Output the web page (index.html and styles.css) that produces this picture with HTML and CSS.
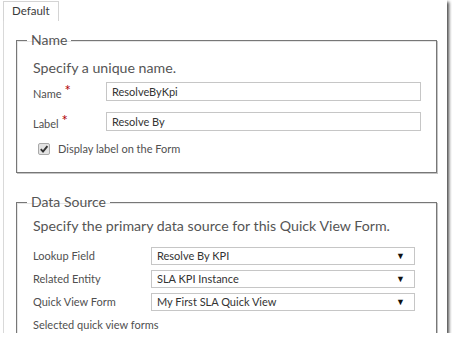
FILE: index.html
```html
<!DOCTYPE html>
<html lang="en">
<head>
  <meta charset="UTF-8" />
  <title>Quick View Form - Default</title>
  <link rel="stylesheet" href="styles.css">
</head>
<body>
  <div class="shot">
    <div class="tabs">
      <span class="tab">Default</span>
    </div>

    <div class="panel">
      <fieldset class="group group-name">
        <legend>Name</legend>
        <div class="body">
          <p class="hint">Specify a unique name.</p>

          <div class="fields fields-name">
            <label class="lbl lbl-req">Name <span class="req">*</span></label>
            <div class="box">ResolveByKpi</div>
            <label class="lbl lbl-req">Label <span class="req">*</span></label>
            <div class="box">Resolve By</div>
          </div>

          <div class="check-row">
            <span class="check">
              <svg width="12" height="12" viewBox="0 0 12 12">
                <rect x="0.5" y="0.5" width="11" height="11" rx="1.5" fill="#e3e3e3" stroke="#a9a9a9"/>
                <path d="M2.8 6.2 L5 8.6 L9.4 3.2" fill="none" stroke="#333" stroke-width="1.9"/>
              </svg>
            </span>
            <span>Display label on the Form</span>
          </div>
        </div>
      </fieldset>

      <fieldset class="group group-data">
        <legend>Data Source</legend>
        <div class="body">
          <p class="hint">Specify the primary data source for this Quick View Form.</p>

          <div class="fields fields-data">
            <label class="lbl">Lookup Field</label>
            <div class="box select">Resolve By KPI<span class="arrow">▼</span></div>
            <label class="lbl">Related Entity</label>
            <div class="box select">SLA KPI Instance<span class="arrow">▼</span></div>
            <label class="lbl">Quick View Form</label>
            <div class="box select">My First SLA Quick View<span class="arrow">▼</span></div>
          </div>

          <p class="note">Selected quick view forms</p>
        </div>
      </fieldset>
    </div>
  </div>
</body>
</html>
```

FILE: styles.css
```css
body {
  margin: 0;
  background-color: #ffffff;
  font-family: 'Lato', 'Open Sans', sans-serif;
  color: #4a4a4a;
}

.shot {
  width: 447px;
  height: 333px;
  overflow: hidden;
  background-color: #fff;
  box-shadow: 2px 2px 3px #4a4a4a;
}

/* tab strip */
.tabs {
  display: flex;
  padding: 1px 0 0 3px;
  height: 19px;
}

.tab {
  width: 46px;
  height: 19px;
  padding-left: 8px;
  border: 1px solid #d4d4d4;
  border-bottom: none;
  font-size: 11.5px;
  line-height: 18px;
  color: #3a3a3a;
}

.panel {
  margin-left: 3px;
  border-left: 1px solid #d9d9d9;
  padding: 10px 0 0 12px;
  height: 400px;
}

/* groups */
.group {
  width: 421px;
  box-sizing: border-box;
  margin: 0;
  padding: 0 0 0 10px;
  border: 1px solid #777;
  box-shadow: 1px 1px 0 #c4c4c4, inset 1px 1px 0 #e6e6e6;
}

.group legend {
  padding: 0 4px;
  font-size: 14px;
  line-height: 20px;
  color: #555;
}

.group-name {
  height: 143px;
}

.group-data {
  margin-top: 19px;
  height: 200px;
}

.body {
  padding-left: 6px;
}

.hint {
  margin: 0;
  font-size: 14.2px;
  line-height: 20px;
  color: #555;
}

.group-name .hint {
  margin-top: 8px;
}

.group-data .hint {
  margin-top: 4px;
}

.fields {
  display: grid;
  align-items: start;
}

.fields-name {
  grid-template-columns: 73px 315px;
  grid-auto-rows: 19px;
  row-gap: 11px;
  margin-top: 4px;
}

.fields-data {
  grid-template-columns: 118px 264px;
  grid-auto-rows: 18px;
  row-gap: 5px;
  margin-top: 11px;
}

.lbl {
  font-size: 11px;
  line-height: 18px;
  color: #505050;
}

.lbl-req {
  padding-top: 3px;
}

.req {
  color: #b00000;
  font-size: 15px;
  line-height: 10px;
  vertical-align: 2px;
}

.box {
  box-sizing: border-box;
  height: 19px;
  padding-left: 5px;
  border: 1px solid #c6c6c6;
  font-size: 11px;
  line-height: 17px;
  color: #333;
  background-color: #fff;
}

.select {
  height: 18px;
  line-height: 16px;
  display: flex;
  justify-content: space-between;
}

.arrow {
  font-size: 9px;
  color: #111;
  padding-right: 9px;
}

.check-row {
  display: flex;
  align-items: center;
  gap: 8px;
  margin: 12px 0 0 5px;
  font-size: 11px;
  line-height: 12px;
  color: #505050;
}

.check {
  display: flex;
  width: 12px;
  height: 12px;
}

.note {
  margin: 6px 0 0;
  font-size: 11px;
  line-height: 16px;
  color: #505050;
}
```
